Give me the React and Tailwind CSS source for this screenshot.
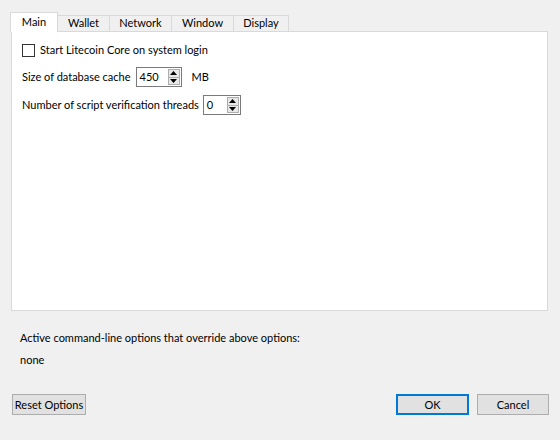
import React from 'react';

const tabs = [
  { label: 'Main', w: 'w-[48px]', active: true },
  { label: 'Wallet', w: 'w-[53px]' },
  { label: 'Network', w: 'w-[63px]' },
  { label: 'Window', w: 'w-[63px]' },
  { label: 'Display', w: 'w-[56px]' },
];

const Arrow = ({ up }) => (
  <svg width="7" height="4" viewBox="0 0 7 4" className="block">
    {up ? <path d="M0 4 L3.5 0 L7 4 Z" fill="#000" /> : <path d="M0 0 L3.5 4 L7 0 Z" fill="#000" />}
  </svg>
);

const SpinBox = ({ value, width }) => (
  <div className={`flex h-[20px] ${width} items-stretch border border-[#7a7a7a] bg-white`}>
    <span className="flex-1 pl-[3px] leading-[18px]">{value}</span>
    <div className="flex w-[13px] flex-col py-[1px] pr-[1px]">
      <div className="flex flex-1 items-center justify-center border border-[#adadad] bg-[#e8e8e8]">
        <Arrow up />
      </div>
      <div className="flex flex-1 items-center justify-center border border-t-0 border-[#adadad] bg-[#e8e8e8]">
        <Arrow />
      </div>
    </div>
  </div>
);

export default function App() {
  return (
    <div className="flex h-[440px] w-[560px] flex-col bg-[#f0f0f0] px-[11px] pt-[12px] font-['Lato',sans-serif] text-[11px] text-black">
      {/* tab strip */}
      <div className="relative z-10 -mb-[1px] flex h-[20px] items-end">
        {tabs.map((t) =>
          t.active ? (
            <div
              key={t.label}
              className={`-ml-[1px] flex h-[20px] ${t.w} items-center justify-center border border-b-0 border-[#d9d9d9] bg-white pb-[1px]`}
            >
              {t.label}
            </div>
          ) : (
            <div
              key={t.label}
              className={`-ml-[1px] flex h-[17px] ${t.w} items-center justify-center border border-[#d9d9d9] bg-[#f0f0f0]`}
            >
              {t.label}
            </div>
          )
        )}
      </div>

      {/* page */}
      <div className="flex h-[280px] w-[537px] flex-col border border-[#d9d9d9] bg-white px-[10px] pt-[12px]">
        <label className="flex h-[13px] items-center gap-[5px]">
          <span className="h-[13px] w-[13px] border border-[#333333] bg-white" />
          <span>Start Litecoin Core on system login</span>
        </label>
        <div className="mt-[10px] flex items-center">
          <span>Size of database cache</span>
          <span className="ml-[5px]">
            <SpinBox value="450" width="w-[46px]" />
          </span>
          <span className="ml-[10px]">MB</span>
        </div>
        <div className="mt-[8px] flex items-center">
          <span>Number of script verification threads</span>
          <span className="ml-[4px]">
            <SpinBox value="0" width="w-[38px]" />
          </span>
        </div>
      </div>

      {/* override info */}
      <div className="ml-[9px] mt-[19px] leading-[16px]">Active command-line options that override above options:</div>
      <div className="ml-[9px] mt-[6px] leading-[16px]">none</div>

      {/* buttons */}
      <div className="mt-[26px] flex items-center">
        <button className="ml-[1px] h-[21px] w-[74px] whitespace-nowrap border border-[#adadad] bg-[#e1e1e1] leading-[19px]">Reset Options</button>
        <div className="flex-1" />
        <button className="h-[21px] w-[73px] border-2 border-[#0078d7] bg-[#e1e1e1] leading-[17px]">OK</button>
        <button className="ml-[8px] h-[21px] w-[72px] border border-[#adadad] bg-[#e1e1e1] leading-[19px]">Cancel</button>
      </div>
    </div>
  );
}
